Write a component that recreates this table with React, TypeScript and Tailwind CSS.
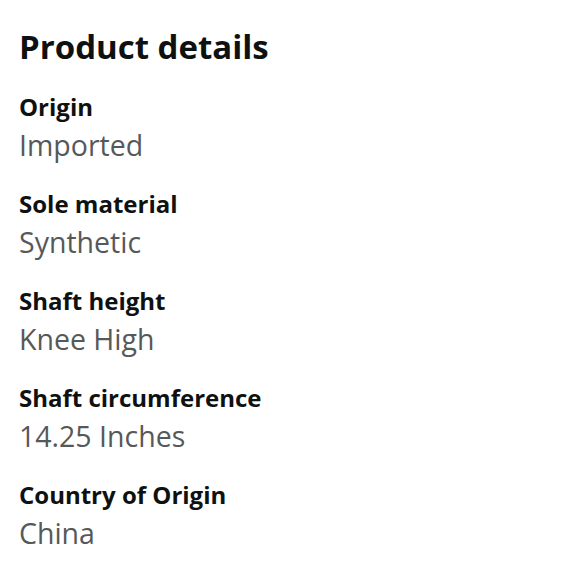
const details = [
  { label: 'Origin', value: 'Imported' },
  { label: 'Sole material', value: 'Synthetic' },
  { label: 'Shaft height', value: 'Knee High' },
  { label: 'Shaft circumference', value: '14.25 Inches' },
  { label: 'Country of Origin', value: 'China' },
];

export default function App() {
  return (
    <div className="min-h-[580px] w-[580px] bg-white px-[19px] pt-[23px] font-['Open_Sans',sans-serif] text-[#0f1111]">
      <h1 className="text-[33px] font-bold leading-[48px]">Product details</h1>
      <dl className="mt-[17px] flex flex-col gap-[20px]">
        {details.map((d) => (
          <div key={d.label}>
            <dt className="text-[24px] font-bold leading-[37px]">{d.label}</dt>
            <dd className="text-[28.5px] leading-[40px] text-[#565959]">{d.value}</dd>
          </div>
        ))}
      </dl>
    </div>
  );
}
